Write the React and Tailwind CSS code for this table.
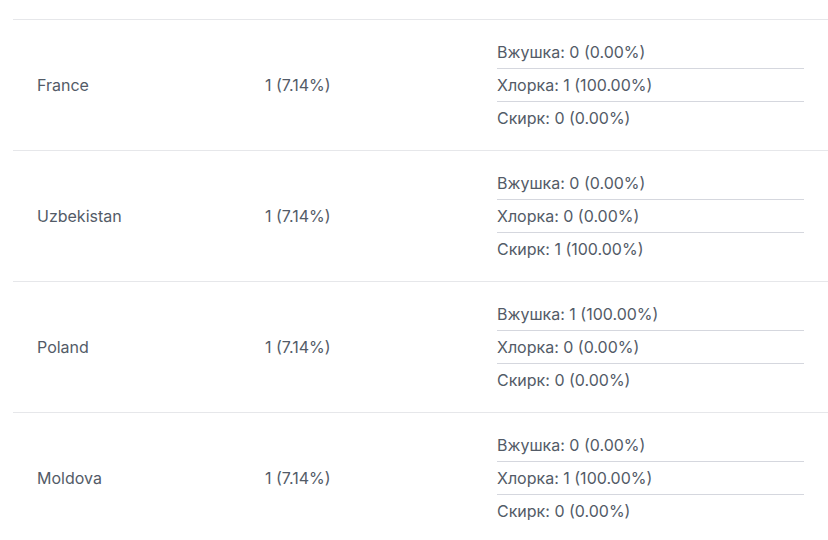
const rows = [
  { country: "France", total: "1 (7.14%)", items: ["Вжушка: 0 (0.00%)", "Хлорка: 1 (100.00%)", "Скирк: 0 (0.00%)"] },
  { country: "Uzbekistan", total: "1 (7.14%)", items: ["Вжушка: 0 (0.00%)", "Хлорка: 0 (0.00%)", "Скирк: 1 (100.00%)"] },
  { country: "Poland", total: "1 (7.14%)", items: ["Вжушка: 1 (100.00%)", "Хлорка: 0 (0.00%)", "Скирк: 0 (0.00%)"] },
  { country: "Moldova", total: "1 (7.14%)", items: ["Вжушка: 0 (0.00%)", "Хлорка: 1 (100.00%)", "Скирк: 0 (0.00%)"] },
]

export default function App() {
  return (
    <div className="min-h-[540px] bg-white pt-[19px] pl-[13px] text-[16px] text-[#535b67] font-['Inter',sans-serif] overflow-hidden">
      {rows.map((row) => (
        <div key={row.country} className="grid grid-cols-[228px_232px_1fr] border-t border-[#e6e7ea] py-4">
          <div className="flex items-center px-6">{row.country}</div>
          <div className="flex items-center px-6">{row.total}</div>
          <div className="px-6">
            {row.items.map((item, i) => (
              <div key={i} className={`flex items-center ${i > 0 ? "h-[33px] border-t border-[#d5d7de]" : "h-8"}`}>
                {item}
              </div>
            ))}
          </div>
        </div>
      ))}
    </div>
  )
}
